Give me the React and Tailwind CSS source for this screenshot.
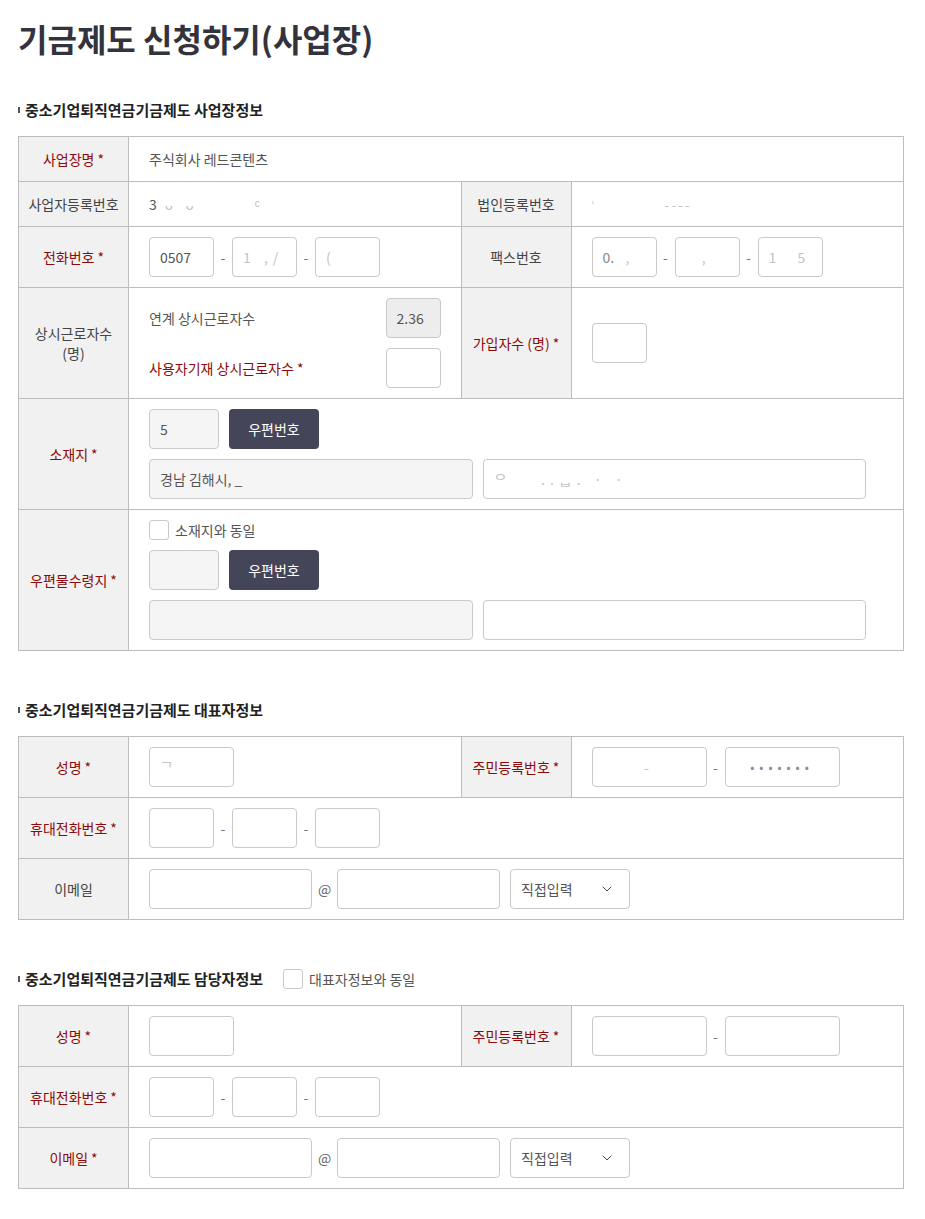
import { ChevronDown } from 'lucide-react'

const cellBorder = 'border-r border-b border-[#bdbdbd]'

// label cell in the gray column
function Label({ children, required, className = '' }) {
  return (
    <div
      className={`${cellBorder} bg-[#f1f1f1] flex items-center justify-center text-center px-1 leading-[20px] ${
        required ? 'text-[#8b0a0a]' : 'text-[#444]'
      } ${className}`}
    >
      <span>
        {children}
        {required && <span className="ml-[3px]">*</span>}
      </span>
    </div>
  )
}

function Value({ children, className = '' }) {
  return <div className={`${cellBorder} px-5 flex items-center ${className}`}>{children}</div>
}

function Input({ w = 'w-[65px]', gray, dark, children, className = '' }) {
  return (
    <div
      className={`${w} h-[40px] shrink-0 rounded-[4px] border border-[#c9c9c9] flex items-center px-[10px] text-[#555] whitespace-nowrap overflow-hidden ${
        dark ? 'bg-[#ededed]' : gray ? 'bg-[#f5f5f5]' : 'bg-white'
      } ${className}`}
    >
      {children}
    </div>
  )
}

function Dash() {
  return <span className="w-[18px] text-center text-[#777] shrink-0">-</span>
}

function Faint({ children }) {
  return <span className="text-[#c4c4c4] tracking-[5px]">{children}</span>
}

function PhoneInputs({ a, b, c }) {
  return (
    <div className="flex items-center">
      <Input>{a}</Input>
      <Dash />
      <Input>{b}</Input>
      <Dash />
      <Input>{c}</Input>
    </div>
  )
}

function Checkbox() {
  return <span className="w-[20px] h-[20px] rounded-[3px] border border-[#c9c9c9] bg-white shrink-0" />
}

function ZipButton() {
  return (
    <button className="w-[90px] h-[40px] rounded-[4px] bg-[#45455a] text-white text-[14px]">우편번호</button>
  )
}

function SectionTitle({ children, extra }) {
  return (
    <div className="flex items-center h-[20px] mb-4">
      <span className="w-[2px] h-[6px] bg-[#555] mr-[5px]" />
      <h2 className="text-[15px] font-semibold text-[#222] leading-[20px]">{children}</h2>
      {extra}
    </div>
  )
}

function Grid({ children }) {
  return (
    <div className="grid grid-cols-[110px_1fr_110px_1fr] border-t border-l border-[#bdbdbd]">{children}</div>
  )
}

function EmailRow({ required }) {
  return (
    <>
      <Label required={required} className="h-[61px]">이메일</Label>
      <Value className="col-span-3">
        <Input w="w-[163px]" />
        <span className="w-[25px] text-center text-[#666] text-[14px]">@</span>
        <Input w="w-[163px]" />
        <div className="ml-[10px] w-[120px] h-[40px] rounded-[4px] border border-[#c9c9c9] flex items-center justify-between pl-[10px] pr-[14px] text-[#555]">
          <span>직접입력</span>
          <ChevronDown size={16} strokeWidth={1.5} className="text-[#444]" />
        </div>
      </Value>
    </>
  )
}

export default function App() {
  return (
    <div className="font-['Noto_Sans_CJK_KR',sans-serif] text-[14px] bg-white pl-[18px] pr-[21px] pt-[18px] pb-[30px]">
      <h1 className="text-[32px] font-bold text-[#33333d] leading-[40px]">기금제도 신청하기(사업장)</h1>

      <div className="mt-[42px]">
        <SectionTitle>중소기업퇴직연금기금제도 사업장정보</SectionTitle>
        <Grid>
          <Label required className="h-[45px]">사업장명</Label>
          <Value className="col-span-3 text-[#555]">주식회사 레드콘텐츠</Value>

          <Label className="h-[45px]">사업자등록번호</Label>
          <Value className="text-[#555]">
            3 <Faint>&nbsp;ᴗ ᴗ</Faint>
            <span className="ml-[56px] text-[#bbb]">ᶜ</span>
          </Value>
          <Label>법인등록번호</Label>
          <Value>
            <span className="text-[#ccc] text-[10px]">ʻ</span>
            <span className="ml-[70px] text-[#c4c4c4] tracking-[2px]">----</span>
          </Value>

          <Label required className="h-[61px]">전화번호</Label>
          <Value>
            <PhoneInputs a="0507" b={<Faint>1 ,/</Faint>} c={<Faint>(</Faint>} />
          </Value>
          <Label>팩스번호</Label>
          <Value>
            <PhoneInputs a={<span className="text-[#888]">0. <Faint>&nbsp;,</Faint></span>} b={<Faint>&nbsp;&nbsp;,</Faint>} c={<Faint>1 &nbsp;5</Faint>} />
          </Value>

          <Label className="h-[111px]">
            상시근로자수
            <br />
            (명)
          </Label>
          <Value className="flex-col items-stretch justify-center gap-[10px]">
            <div className="flex items-center justify-between">
              <span className="text-[#555]">연계 상시근로자수</span>
              <Input w="w-[55px]" dark>2.36</Input>
            </div>
            <div className="flex items-center justify-between">
              <span className="text-[#8b0a0a]">사용자기재 상시근로자수 *</span>
              <Input w="w-[55px]" />
            </div>
          </Value>
          <Label required>가입자수 (명)</Label>
          <Value>
            <Input w="w-[55px]" />
          </Value>

          <Label required className="h-[111px]">소재지</Label>
          <Value className="col-span-3 flex-col items-start justify-center gap-[10px]">
            <div className="flex items-center gap-[10px]">
              <Input w="w-[70px]" gray>5</Input>
              <ZipButton />
            </div>
            <div className="flex items-center gap-[10px]">
              <Input w="w-[324px]" gray>경남 김해시, _</Input>
              <Input w="w-[383px]"><Faint>ᄋ ᅟ ..ᆸ. · ·</Faint></Input>
            </div>
          </Value>

          <Label required className="h-[141px]">우편물수령지</Label>
          <Value className="col-span-3 flex-col items-start justify-center gap-[10px]">
            <label className="flex items-center gap-[6px] h-[20px] text-[#555]">
              <Checkbox />
              소재지와 동일
            </label>
            <div className="flex items-center gap-[10px]">
              <Input w="w-[70px]" gray />
              <ZipButton />
            </div>
            <div className="flex items-center gap-[10px]">
              <Input w="w-[324px]" gray />
              <Input w="w-[383px]" />
            </div>
          </Value>
        </Grid>
      </div>

      <div className="mt-[49px]">
        <SectionTitle>중소기업퇴직연금기금제도 대표자정보</SectionTitle>
        <Grid>
          <Label required className="h-[61px]">성명</Label>
          <Value>
            <Input w="w-[85px]"><Faint>ᄀ</Faint></Input>
          </Value>
          <Label required>주민등록번호</Label>
          <Value>
            <Input w="w-[115px]" className="justify-center"><Faint>-</Faint></Input>
            <Dash />
            <Input w="w-[115px]" className="justify-center">
              <span className="text-[#8a8a9a] text-[12px] tracking-[5px]">•••••••</span>
            </Input>
          </Value>

          <Label required className="h-[61px]">휴대전화번호</Label>
          <Value className="col-span-3">
            <PhoneInputs />
          </Value>

          <EmailRow />
        </Grid>
      </div>

      <div className="mt-[49px]">
        <SectionTitle
          extra={
            <label className="flex items-center gap-[6px] ml-[20px] text-[#555] text-[14px] font-normal">
              <Checkbox />
              대표자정보와 동일
            </label>
          }
        >
          중소기업퇴직연금기금제도 담당자정보
        </SectionTitle>
        <Grid>
          <Label required className="h-[61px]">성명</Label>
          <Value>
            <Input w="w-[85px]" />
          </Value>
          <Label required>주민등록번호</Label>
          <Value>
            <Input w="w-[115px]" />
            <Dash />
            <Input w="w-[115px]" />
          </Value>

          <Label required className="h-[61px]">휴대전화번호</Label>
          <Value className="col-span-3">
            <PhoneInputs />
          </Value>

          <EmailRow required />
        </Grid>
      </div>
    </div>
  )
}
